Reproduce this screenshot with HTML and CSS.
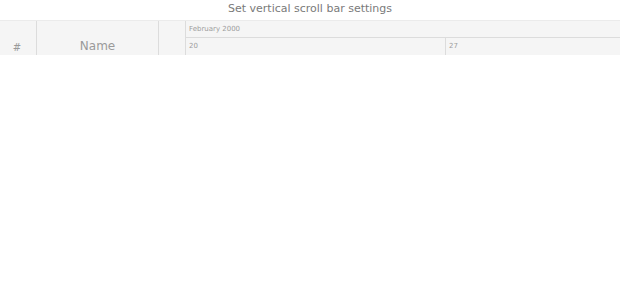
FILE: index.html
```html
<!DOCTYPE html>
<html>
<head>
<meta charset="utf-8">
<link rel="stylesheet" href="styles.css">
</head>
<body>
<div class="title">Set vertical scroll bar settings</div>
<div class="gantt">
  <div class="grid-head">
    <div class="col col-id">#</div>
    <div class="col col-name">Name</div>
    <div class="col col-extra"></div>
  </div>
  <div class="timeline">
    <div class="t-row t-month">February 2000</div>
    <div class="t-row t-weeks">
      <div class="week">20</div>
      <div class="week">27</div>
    </div>
  </div>
</div>
</body>
</html>
```
FILE: styles.css
```css
* { box-sizing: border-box; }
body {
  margin: 0;
  background: #fff;
  font-family: "DejaVu Sans", sans-serif;
  color: #777;
}
.title {
  height: 20px;
  line-height: 17px;
  text-align: center;
  font-size: 11px;
  color: #7a7a7a;
}
.gantt {
  display: flex;
  height: 35px;
  background: #f5f5f5;
  border-top: 1px solid #ebebeb;
  overflow: hidden;
}
.grid-head {
  display: flex;
  width: 186px;
  height: 34px;
}
.col {
  display: flex;
  align-items: flex-end;
  justify-content: center;
  padding-bottom: 2px;
  font-size: 12px;
  color: #9a9a9a;
  border-right: 1px solid #dcdcdc;
}
.col-id { width: 37px; font-size: 10px; padding-right: 2px; }
.col-name { width: 122px; }
.col-extra { width: 27px; border-right: 1px solid #dcdcdc; }
.timeline {
  flex: 1;
  min-width: 0;
  display: flex;
  flex-direction: column;
  overflow: hidden;
}
.t-row {
  height: 17px;
  font-size: 7px;
  color: #9d9d9d;
  padding-left: 3px;
  line-height: 17px;
}
.t-month { border-bottom: 1px solid #dcdcdc; }
.t-weeks { display: flex; padding-left: 0; }
.week {
  flex: 0 0 260px;
  padding-left: 3px;
  border-right: 1px solid #dcdcdc;
}
```
